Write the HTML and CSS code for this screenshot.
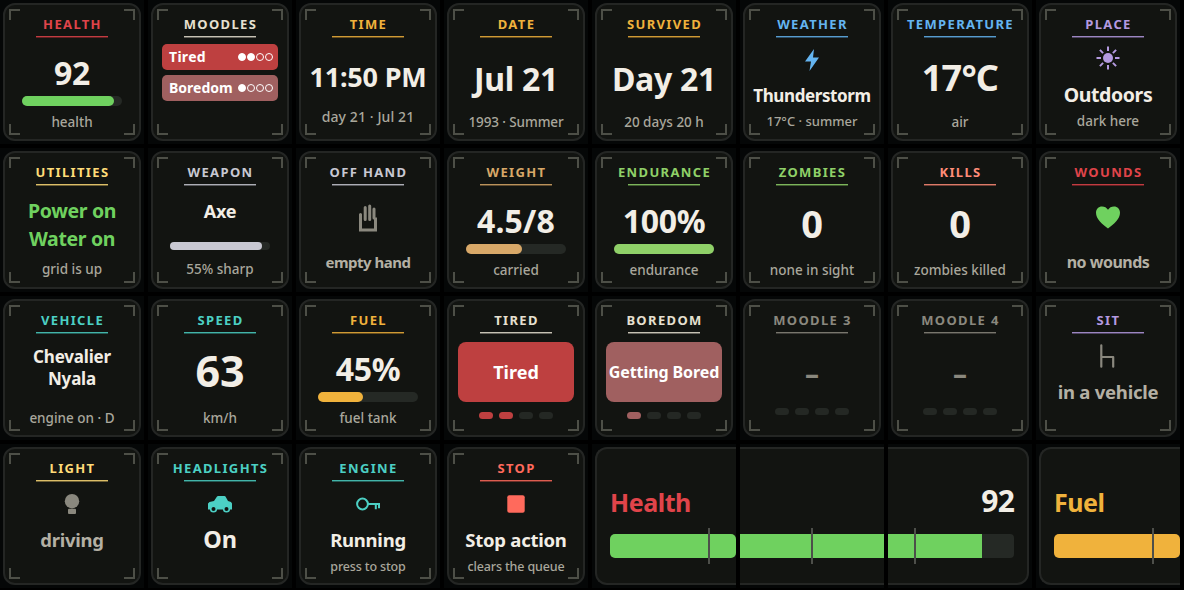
FILE: index.html
```html
<!DOCTYPE html>
<html lang="en">

<head>
    <meta charset="UTF-8">
    <meta name="viewport" content="width=device-width, initial-scale=1.0">
    <title>Survivor deck</title>
    <link rel="stylesheet" href="styles.css">
</head>

<body>
    <main class="deck">
        <!-- row 1 -->
        <section class="key">
            <div class="card">
                <h2 class="title red">HEALTH</h2>
                <p class="value gauge">92</p>
                <div class="bar"><div class="fill bg-green" style="width: 92%"></div></div>
                <p class="caption">health</p>
            </div>
        </section>
        <section class="key">
            <div class="card">
                <h2 class="title cream">MOODLES</h2>
                <div class="moodles">
                    <div class="moodle bg-strong"><span class="name wide">Tired</span><span class="dots"><i class="on"></i><i class="on"></i><i></i><i></i></span></div>
                    <div class="moodle bg-weak"><span class="name">Boredom</span><span class="dots"><i class="on"></i><i></i><i></i><i></i></span></div>
                </div>
            </div>
        </section>
        <section class="key">
            <div class="card">
                <h2 class="title amber">TIME</h2>
                <p class="value clock">11:50 PM</p>
                <p class="caption high">day 21 · Jul 21</p>
            </div>
        </section>
        <section class="key">
            <div class="card">
                <h2 class="title amber">DATE</h2>
                <p class="value date">Jul 21</p>
                <p class="caption snug">1993 · Summer</p>
            </div>
        </section>
        <section class="key">
            <div class="card">
                <h2 class="title amber">SURVIVED</h2>
                <p class="value date">Day 21</p>
                <p class="caption">20 days 20 h</p>
            </div>
        </section>
        <section class="key">
            <div class="card">
                <h2 class="title blue">WEATHER</h2>
                <svg class="icon blue" viewBox="0 0 24 24"><path d="M14 1 5 13.500h6L9.500 23 19 9.500h-6z" fill="currentColor"/></svg>
                <p class="label long">Thunderstorm</p>
                <p class="caption small">17°C · summer</p>
            </div>
        </section>
        <section class="key">
            <div class="card">
                <h2 class="title blue">TEMPERATURE</h2>
                <p class="value temp">17°C</p>
                <p class="caption">air</p>
            </div>
        </section>
        <section class="key">
            <div class="card">
                <h2 class="title purple">PLACE</h2>
                <svg class="icon raised purple" viewBox="0 0 24 24">
                    <circle cx="12" cy="12" r="5" fill="currentColor"/>
                    <path d="M12 .5v4.500M12 19v4.500M.5 12H5M19 12h4.500M3.900 3.900l3.200 3.200M16.900 16.900l3.200 3.200M3.900 20.100l3.200-3.200M16.900 7.100l3.200-3.200" stroke="currentColor" stroke-width="2"/>
                </svg>
                <p class="label place">Outdoors</p>
                <p class="caption up">dark here</p>
            </div>
        </section>

        <!-- row 2 -->
        <section class="key">
            <div class="card">
                <h2 class="title yellow">UTILITIES</h2>
                <p class="lines green">Power on<br>Water on</p>
                <p class="caption up">grid is up</p>
            </div>
        </section>
        <section class="key">
            <div class="card">
                <h2 class="title silver">WEAPON</h2>
                <p class="label weapon">Axe</p>
                <div class="bar thin"><div class="fill bg-silver" style="width: 92%"></div></div>
                <p class="caption up">55% sharp</p>
            </div>
        </section>
        <section class="key">
            <div class="card">
                <h2 class="title silver">OFF HAND</h2>
                <svg class="icon big dim" viewBox="0 0 28 28" fill="none" stroke="currentColor" stroke-linecap="round">
                    <path d="M6.500 10.500V26h15V13.500" stroke-width="3" stroke-linecap="butt"/>
                    <path d="M6.500 10.500v2M11.200 3.500v12M15.700 2v13.500M20 5v9" stroke-width="3"/>
                </svg>
                <p class="label low muted">empty hand</p>
            </div>
        </section>
        <section class="key">
            <div class="card">
                <h2 class="title tan">WEIGHT</h2>
                <p class="value gauge ratio">4.5/8</p>
                <div class="bar"><div class="fill bg-tan" style="width: 56%"></div></div>
                <p class="caption">carried</p>
            </div>
        </section>
        <section class="key">
            <div class="card">
                <h2 class="title lime">ENDURANCE</h2>
                <p class="value gauge">100%</p>
                <div class="bar"><div class="fill bg-lime" style="width: 100%"></div></div>
                <p class="caption">endurance</p>
            </div>
        </section>
        <section class="key">
            <div class="card">
                <h2 class="title lime">ZOMBIES</h2>
                <p class="value count">0</p>
                <p class="caption">none in sight</p>
            </div>
        </section>
        <section class="key">
            <div class="card">
                <h2 class="title salmon">KILLS</h2>
                <p class="value count">0</p>
                <p class="caption">zombies killed</p>
            </div>
        </section>
        <section class="key">
            <div class="card">
                <h2 class="title red">WOUNDS</h2>
                <svg class="icon big green" viewBox="0 0 28 28"><path d="M14 24.500C8 20 2 15 2 8.800 2 5 4.500 2.500 8 2.500c2.600 0 4.700 1.200 6 3.300 1.300-2.100 3.400-3.300 6-3.300 3.500 0 6 2.500 6 6.300 0 6.200-6 11.200-12 15.700z" fill="currentColor"/></svg>
                <p class="label low wounds muted">no wounds</p>
            </div>
        </section>

        <!-- row 3 -->
        <section class="key">
            <div class="card">
                <h2 class="title teal">VEHICLE</h2>
                <p class="lines vehicle">Chevalier<br>Nyala</p>
                <p class="caption">engine on · D</p>
            </div>
        </section>
        <section class="key">
            <div class="card">
                <h2 class="title teal">SPEED</h2>
                <p class="value speed">63</p>
                <p class="caption">km/h</p>
            </div>
        </section>
        <section class="key">
            <div class="card">
                <h2 class="title amber">FUEL</h2>
                <p class="value gauge">45%</p>
                <div class="bar"><div class="fill bg-amber" style="width: 45%"></div></div>
                <p class="caption">fuel tank</p>
            </div>
        </section>
        <section class="key">
            <div class="card">
                <h2 class="title cream">TIRED</h2>
                <div class="state bg-strong">Tired</div>
                <div class="pips"><i class="bg-strong"></i><i class="bg-strong"></i><i></i><i></i></div>
            </div>
        </section>
        <section class="key">
            <div class="card">
                <h2 class="title cream">BOREDOM</h2>
                <div class="state bg-weak tight">Getting Bored</div>
                <div class="pips"><i class="bg-weak"></i><i></i><i></i><i></i></div>
            </div>
        </section>
        <section class="key">
            <div class="card">
                <h2 class="title dim">MOODLE 3</h2>
                <p class="value empty dim">–</p>
                <div class="pips"><i></i><i></i><i></i><i></i></div>
            </div>
        </section>
        <section class="key">
            <div class="card">
                <h2 class="title dim">MOODLE 4</h2>
                <p class="value empty dim">–</p>
                <div class="pips"><i></i><i></i><i></i><i></i></div>
            </div>
        </section>
        <section class="key">
            <div class="card">
                <h2 class="title purple">SIT</h2>
                <svg class="icon dim" viewBox="0 0 24 24"><path d="M5.300 1.300v21.400M5.300 13h11.900v9.700" fill="none" stroke="currentColor" stroke-width="2.200" stroke-linecap="round" stroke-linejoin="round"/></svg>
                <p class="label muted">in a vehicle</p>
            </div>
        </section>

        <!-- row 4 -->
        <section class="key">
            <div class="card">
                <h2 class="title yellow">LIGHT</h2>
                <svg class="icon dim" viewBox="0 0 24 24" fill="currentColor"><circle cx="12" cy="9.200" r="7.200"/><rect x="8" y="16.700" width="8" height="5.300" rx="1"/></svg>
                <p class="label muted">driving</p>
            </div>
        </section>
        <section class="key">
            <div class="card">
                <h2 class="title teal">HEADLIGHTS</h2>
                <svg class="icon teal" viewBox="0 0 24 24">
                    <path d="M0 17.500V11.500L1.500 10l4.500-1 3-4.500Q9.500 4 10 4h6.500q.5 0 1 .5L20 9l3 1 1 1.500v6z" fill="currentColor"/>
                    <circle class="wheel" cx="5.500" cy="17" r="2.800"/>
                    <circle class="wheel" cx="18.500" cy="17" r="2.800"/>
                </svg>
                <p class="label on">On</p>
            </div>
        </section>
        <section class="key">
            <div class="card">
                <h2 class="title teal">ENGINE</h2>
                <svg class="icon teal" viewBox="0 0 24 24" fill="none" stroke="currentColor" stroke-width="2"><circle cx="6.500" cy="12" r="5.400"/><path d="M12 12h12M19.800 12v5.300M23 12v4.300"/></svg>
                <p class="label">Running</p>
                <p class="caption tiny">press to stop</p>
            </div>
        </section>
        <section class="key">
            <div class="card">
                <h2 class="title coral">STOP</h2>
                <svg class="icon coral" viewBox="0 0 24 24"><rect x="3.300" y="3.200" width="17.400" height="17.600" rx="2" fill="currentColor"/></svg>
                <p class="label">Stop action</p>
                <p class="caption tiny">clears the queue</p>
            </div>
        </section>

        <!-- health strip over three keys -->
        <section class="key strip start">
            <div class="panel">
                <p class="strip-text red">Health</p>
                <div class="track"><div class="level bg-green"></div><span class="tick"></span></div>
            </div>
        </section>
        <section class="key strip middle">
            <div class="panel">
                <p class="strip-text"></p>
                <div class="track"><div class="level bg-green"></div><span class="tick"></span></div>
            </div>
        </section>
        <section class="key strip end">
            <div class="panel">
                <p class="strip-text number">92</p>
                <div class="track"><div class="level bg-green" style="width: 74.8%"></div><span class="tick"></span></div>
            </div>
        </section>
        <section class="key strip start">
            <div class="panel">
                <p class="strip-text amber">Fuel</p>
                <div class="track"><div class="level bg-amber"></div><span class="tick"></span></div>
            </div>
        </section>
    </main>
</body>

</html>
```
FILE: styles.css
```css
body {
    margin: 0;
    background: #000;
    color: #f2eee6;
    font-family: "Noto Sans", "Open Sans", sans-serif;
    overflow: hidden;
}

h2,
p {
    margin: 0;
}

.deck {
    display: grid;
    grid-template-columns: repeat(8, 144px);
    grid-auto-rows: 144px;
    gap: 4px;
}

.key {
    box-sizing: border-box;
    padding: 3px;
    background: #050707;
    overflow: hidden;
}

.card {
    position: relative;
    box-sizing: border-box;
    height: 138px;
    display: flex;
    flex-direction: column;
    align-items: center;
    background: #121411;
    border: 2px solid #242624;
    border-radius: 12px;
    text-align: center;
    white-space: nowrap;
}

/* corner brackets */
.card::before {
    content: "";
    position: absolute;
    inset: 4px;
    --c: linear-gradient(#4d4f47, #4d4f47);
    background:
        var(--c) 0 0 / 11px 2px, var(--c) 0 0 / 2px 11px,
        var(--c) 100% 0 / 11px 2px, var(--c) 100% 0 / 2px 11px,
        var(--c) 0 100% / 11px 2px, var(--c) 0 100% / 2px 11px,
        var(--c) 100% 100% / 11px 2px, var(--c) 100% 100% / 2px 11px;
    background-repeat: no-repeat;
}

.title {
    position: relative;
    margin-top: 9px;
    padding-left: 1px;
    font-size: 13px;
    font-weight: 700;
    line-height: 20px;
    letter-spacing: 1.35px;
    display: flex;
    flex-direction: column;
    align-items: center;
}

/* underline, second pixel row is dimmer */
.title::after {
    content: "";
    width: 72px;
    height: 1px;
    margin: 2px 1px 0 0;
    background: currentColor;
    border-bottom: 1px solid rgba(0, 0, 0, 0.5);
    opacity: 0.85;
}

/* values */
.value {
    font-weight: 700;
    line-height: 40px;
}

.gauge {
    margin-top: 15px;
    font-size: 32px;
    letter-spacing: -0.3px;
}

.gauge.ratio {
    letter-spacing: 0.2px;
}

.gauge + .bar {
    margin-top: 3px;
}

.clock {
    margin-top: 19px;
    font-size: 27px;
    letter-spacing: -0.2px;
}

.date {
    margin-top: 21px;
    font-size: 32px;
    letter-spacing: -0.3px;
}

.temp {
    margin-top: 20px;
    font-size: 36px;
    letter-spacing: -0.8px;
}

.count {
    margin-top: 17px;
    font-size: 38px;
}

.speed {
    margin-top: 17px;
    font-size: 43px;
}

.empty {
    margin-top: 19px;
    font-size: 28px;
}

.empty + .pips {
    margin-top: 15px;
}

.bar {
    width: 100px;
    height: 10px;
    border-radius: 5px;
    background: #252925;
}

.bar.thin {
    height: 8px;
    margin-top: 18px;
}

.fill {
    height: 100%;
    border-radius: 5px;
}

.caption {
    margin-top: auto;
    margin-bottom: 8px;
    font-size: 13.5px;
    font-weight: 500;
    line-height: 18px;
    color: #a9a79c;
}

.caption.up {
    margin-bottom: 9px;
}

.caption.small {
    margin-bottom: 9px;
    font-size: 13px;
}

.caption.tiny {
    margin-bottom: 7px;
    font-size: 12.5px;
    letter-spacing: -0.15px;
}

.caption.snug {
    letter-spacing: -0.1px;
}

.caption.high {
    margin-bottom: 13px;
    font-size: 14px;
    letter-spacing: 0.1px;
}

/* icon and label */
.icon {
    width: 24px;
    height: 24px;
    margin-top: 10px;
    flex: none;
}

.icon.raised {
    margin-top: 8px;
}

.icon.big {
    width: 28px;
    height: 28px;
    margin-top: 18px;
}

.wheel {
    fill: #121411;
    stroke: currentColor;
    stroke-width: 1.6;
}

.label {
    margin-top: 11px;
    font-size: 18.5px;
    font-weight: 700;
    line-height: 26px;
    letter-spacing: -0.25px;
}

.label.long {
    font-size: 17px;
    letter-spacing: -0.4px;
}

.label.place {
    margin-top: 12px;
    font-size: 19.5px;
    letter-spacing: -0.4px;
}

.label.weapon {
    margin-top: 12px;
    font-size: 18px;
}

.label.low {
    margin-top: 17px;
    font-size: 15px;
    letter-spacing: -0.5px;
}

.label.wounds {
    font-size: 16px;
}

.label.on {
    margin-top: 10px;
    font-size: 23.5px;
}

.lines {
    margin-top: 11px;
    font-size: 19.5px;
    font-weight: 700;
    line-height: 28px;
    letter-spacing: -0.35px;
}

.lines.vehicle {
    margin-top: 12px;
    font-size: 17px;
    line-height: 22px;
    letter-spacing: -0.2px;
}

/* moodles */
.moodles {
    width: 116px;
    margin-top: 6px;
    display: grid;
    gap: 5px;
}

.moodle {
    box-sizing: border-box;
    height: 26px;
    padding: 0 5px 0 7px;
    display: flex;
    align-items: center;
    justify-content: space-between;
    border-radius: 5px;
    color: #fff;
    font-size: 14px;
    font-weight: 700;
    line-height: 26px;
}

.name.wide {
    letter-spacing: 0.3px;
}

.dots {
    display: flex;
    gap: 1px;
}

.dots i {
    box-sizing: border-box;
    flex: none;
    width: 8px;
    height: 8px;
    border: 1px solid #fff;
    border-radius: 50%;
}

.dots .on {
    background: #fff;
}

.state {
    width: 116px;
    height: 60px;
    margin-top: 8px;
    border-radius: 8px;
    color: #fff;
    font-size: 18px;
    font-weight: 700;
    line-height: 60px;
}

.state.tight {
    font-size: 16px;
    letter-spacing: -0.1px;
}

.pips {
    display: flex;
    gap: 6px;
    margin-top: 10px;
}

.pips i {
    width: 14px;
    height: 7px;
    border-radius: 3.5px;
    background-color: #242824;
}

/* strip */
.strip {
    padding: 3px 0;
}

.strip.start {
    padding-left: 3px;
}

.strip.end {
    padding-right: 3px;
}

.panel {
    box-sizing: border-box;
    height: 138px;
    padding-top: 33px;
    background: #121411;
    border: solid #242624;
    border-width: 2px 0;
}

.start .panel {
    padding-left: 13px;
    border-left-width: 2px;
    border-radius: 12px 0 0 12px;
}

.end .panel {
    padding-right: 13px;
    border-right-width: 2px;
    border-radius: 0 12px 12px 0;
}

.strip-text {
    height: 40px;
    font-size: 25px;
    font-weight: 700;
    line-height: 40px;
    letter-spacing: -0.45px;
}

.strip-text.number {
    font-size: 30px;
    line-height: 38px;
    letter-spacing: -0.8px;
    text-align: right;
}

.track {
    position: relative;
    height: 24px;
    margin-top: 12px;
    background: #252925;
}

.start .track {
    background: none;
}

.start .level {
    border-radius: 5px;
}

.end .track {
    border-radius: 0 4px 4px 0;
}

.level {
    height: 100%;
}

.tick {
    position: absolute;
    top: -6px;
    left: 98px;
    width: 2px;
    height: 36px;
    background: #4d4f4a;
}

.middle .tick {
    left: 71px;
}

.end .tick {
    left: 26px;
}

/* colours */
.red { color: #e0444a; }
.cream { color: #e6e0d0; }
.amber { color: #f0b23c; }
.blue { color: #64b4f0; }
.purple { color: #b49ae0; }
.yellow { color: #ffdc78; }
.silver { color: #c8c8d2; }
.tan { color: #d8a868; }
.lime { color: #8fd068; }
.salmon { color: #ff8c78; }
.teal { color: #4cd0c4; }
.coral { color: #ff6a5c; }
.green { color: #6fd15f; }
.dim { color: #8a887e; }
.muted { color: #b4b0a4; }

.bg-green { background-color: #6fd15f; }
.bg-silver { background-color: #c8c8d2; }
.bg-tan { background-color: #d8a868; }
.bg-lime { background-color: #8fd068; }
.bg-amber { background-color: #f0b23c; }
.pips .bg-strong,
.bg-strong { background-color: #be4040; }
.pips .bg-weak,
.bg-weak { background-color: #a06060; }
```
